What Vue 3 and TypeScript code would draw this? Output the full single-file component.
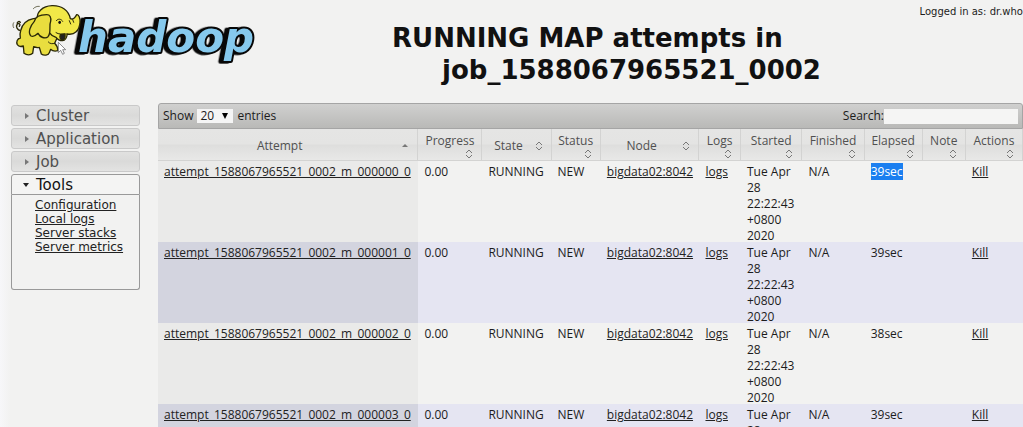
<script setup lang="ts">
interface Column { label: string; key: string; width: string; sorted?: boolean; inline?: boolean }
interface Attempt { id: string; elapsed: string; selected?: boolean }

const columns: Column[] = [
  { label: 'Attempt', key: 'attempt', width: '30.1%', sorted: true, inline: true },
  { label: 'Progress', key: 'progress', width: '7.4%' },
  { label: 'State', key: 'state', width: '8%', inline: true },
  { label: 'Status', key: 'status', width: '5.7%' },
  { label: 'Node', key: 'node', width: '11.4%', inline: true },
  { label: 'Logs', key: 'logs', width: '4.8%' },
  { label: 'Started', key: 'started', width: '7.1%' },
  { label: 'Finished', key: 'finished', width: '7.2%' },
  { label: 'Elapsed', key: 'elapsed', width: '6.7%' },
  { label: 'Note', key: 'note', width: '5%' },
  { label: 'Actions', key: 'actions', width: '6.6%' },
]
const attempts: Attempt[] = [
  { id: 'attempt_1588067965521_0002_m_000000_0', elapsed: '39sec', selected: true },
  { id: 'attempt_1588067965521_0002_m_000001_0', elapsed: '39sec' },
  { id: 'attempt_1588067965521_0002_m_000002_0', elapsed: '38sec' },
  { id: 'attempt_1588067965521_0002_m_000003_0', elapsed: '39sec' },
]
const started = ['Tue Apr', '28', '22:22:43', '+0800', '2020']
const sections = ['Cluster', 'Application', 'Job']
const tools = ['Configuration', 'Local logs', 'Server stacks', 'Server metrics']
</script>

<template>
  <div class="page">
    <header class="top">
      <svg class="logo" viewBox="0 0 810 225" role="img" aria-label="hadoop">
        <text x="234" y="157" class="wordmark">hadoop</text>
        <g stroke="#2a2808" stroke-width="4" stroke-linejoin="round" stroke-linecap="round">
          <path d="M62 92C52 90 46 80 52 72C57 68 63 74 58 79M52 72C50 66 57 62 61 67" fill="none" />
          <path d="M100 56C80 60 66 74 62 92C59 100 60 108 61 114C52 116 48 126 52 134C56 140 64 140 70 138L72 160C80 166 92 166 98 160L101 140C108 143 114 143 118 142L124 162C132 168 146 166 148 158L152 148C158 154 166 154 174 152C174 144 170 136 164 130L174 108L200 98L150 50Z" fill="#e9de3f" />
          <path d="M112 60C108 36 128 18 156 17C186 16 206 32 211 56C219 60 226 52 230 44C236 42 241 54 240 68C238 92 224 106 202 102C200 114 196 122 188 122C178 122 172 118 168 112C160 110 152 104 148 98" fill="#f1e848" />
          <path d="M140 44C122 44 106 50 103 64C92 76 82 98 93 108C101 112 108 106 114 100C120 112 136 118 144 110C155 98 146 78 152 64C154 52 150 44 140 44Z" fill="#e9dd3e" />
          <path d="M181 104C178 112 182 118 187 121C195 119 197 108 194 102Z" fill="#222" />
          <path d="M168 98C176 104 188 102 200 102M208 62L212 72M218 59L221 67M169 62C174 55 184 56 188 64M145 126C150 132 157 132 164 130" fill="none" stroke-width="3" />
          <ellipse cx="179" cy="67" rx="4" ry="5" fill="#111" stroke="none" />
          <path d="M100 26C104 21 112 18 118 19M41 68C38 72 38 78 41 83" fill="none" stroke-width="2" />
        </g>
        <path d="M175 127V158L182 151L188 163L193 160L188 149H197Z" fill="#fff" stroke="#555" stroke-width="2" />
      </svg>
      <h1><span>RUNNING MAP attempts in</span><span class="job">job_1588067965521_0002</span></h1>
      <p class="user">Logged in as: dr.who</p>
    </header>
    <div class="body">
      <nav class="side">
        <button v-for="name in sections" :key="name" type="button" class="section">
          <svg viewBox="0 0 6 8"><path d="M1 1L5 4L1 7Z" /></svg>{{ name }}
        </button>
        <button type="button" class="section open" aria-expanded="true">
          <svg viewBox="0 0 8 6"><path d="M1 1H7L4 5Z" /></svg>Tools
        </button>
        <ul class="links">
          <li v-for="name in tools" :key="name"><a href="#">{{ name }}</a></li>
        </ul>
      </nav>
      <main class="content">
        <div class="toolbar">
          <label class="length">Show
            <span class="pick"><select><option>20</option></select><svg viewBox="0 0 8 6"><path d="M1 0H7L4 6Z" /></svg></span>
            entries</label>
          <label class="search">Search:<input type="text"></label>
        </div>
        <table>
          <colgroup><col v-for="c in columns" :key="c.key" :style="{ width: c.width }"></colgroup>
          <thead>
            <tr>
              <th v-for="c in columns" :key="c.key" scope="col">
                <div class="head" :class="{ inline: c.inline }">
                  <span>{{ c.label }}</span>
                  <svg v-if="c.sorted" class="sort" viewBox="0 0 8 10"><path d="M1 6L4 3L7 6Z" fill="#777" /></svg>
                  <svg v-else class="sort" viewBox="0 0 8 10"><path d="M1 4L4 1L7 4M1 6L4 9L7 6" fill="none" stroke="#777" /></svg>
                </div>
              </th>
            </tr>
          </thead>
          <tbody>
            <tr v-for="a in attempts" :key="a.id">
              <td class="id"><a href="#">{{ a.id }}</a></td>
              <td>0.00</td>
              <td>RUNNING</td>
              <td>NEW</td>
              <td><a href="#">bigdata02:8042</a></td>
              <td><a href="#">logs</a></td>
              <td><div class="date"><div v-for="s in started" :key="s">{{ s }}</div></div></td>
              <td>N/A</td>
              <td><span :class="{ selected: a.selected }">{{ a.elapsed }}</span></td>
              <td></td>
              <td><a href="#">Kill</a></td>
            </tr>
          </tbody>
        </table>
      </main>
    </div>
  </div>
</template>

<style>
html, body { background: #f2f2f1; }
body { margin: 0; overflow: hidden; }
</style>

<style scoped>
.page { height: 100vh; overflow: hidden; box-sizing: border-box; color: #1c1c1c; background: linear-gradient(90deg, #f7f7f9 0, #f2f2f1 10px); font-family: "DejaVu Sans", sans-serif; }
.top { display: grid; grid-template-columns: 270px 1fr 173px; height: 103px; }
.logo { width: 270px; height: 75px; }
.wordmark { font: italic bold 126px "DejaVu Sans", sans-serif; stroke-linejoin: round; paint-order: stroke; fill: #86c9ed; stroke: #080808; stroke-width: 12px; filter: drop-shadow(-10px 2px 0 #080808); }
h1 { margin: 22px 0 0 122px; font-size: 26px; line-height: 32px; white-space: nowrap; color: #111; }
h1 span { display: block; }
h1 .job { margin-left: 50px; }
.user { margin: 5px 0 0; font-size: 10px; line-height: 14px; text-align: right; white-space: nowrap; }
.body { display: flex; align-items: flex-start; gap: 18px; padding-left: 11px; }
.side { flex: 0 0 129px; padding-top: 2px; }
.section { display: flex; align-items: center; gap: 6px; box-sizing: border-box; width: 100%; height: 21px; margin: 0 0 2px; padding: 0 0 0 12px; border: 1px solid #c9c9c9; border-radius: 3px; background: linear-gradient(#e1e1e0, #dadad9 50%, #e3e3e2); color: #505050; font: 15px "DejaVu Sans", sans-serif; }
.section svg { width: 6px; height: 8px; fill: #777; }
.section.open { margin: 0; border-color: #999; border-radius: 3px 3px 0 0; background: #f4f4f3; color: #111; padding-left: 10px; }
.section.open svg { width: 8px; height: 6px; fill: #222; }
.links { box-sizing: border-box; min-height: 95px; margin: 0; padding: 3px 0 0 23px; border: 1px solid #999; border-top: 0; border-radius: 0 0 3px 3px; list-style: none; font-size: 12px; line-height: 14px; white-space: nowrap; }
a { color: #222; text-decoration: underline; }
.content { flex: 1; min-width: 0; font: 12px/16px "Open Sans", sans-serif; }
.toolbar { display: flex; justify-content: space-between; align-items: center; box-sizing: border-box; height: 26px; padding: 0 4px; border: 1px solid #a5a5a5; border-radius: 3px 3px 0 0; background: linear-gradient(#d0d0cf, #b9b9b7); }
.length, .search { display: flex; align-items: center; gap: 4px; }
.search { gap: 0; }
.pick { display: flex; align-items: center; width: 36px; height: 14px; background: #f5f5f5; }
.pick svg { width: 8px; height: 6px; margin-left: -12px; pointer-events: none; }
select { appearance: none; width: 36px; padding: 0 0 0 3px; border: 0; background: transparent; color: #1c1c1c; font: 12px/14px "Open Sans", sans-serif; }
input { box-sizing: border-box; width: 134px; height: 15px; padding: 0 2px; border: 0; background: #f5f5f4; font: inherit; }
table { width: 100%; table-layout: fixed; border-collapse: separate; border-spacing: 0; }
th { height: 32px; padding: 0; box-sizing: border-box; border-right: 1px solid #d3d3d2; border-bottom: 1px solid #d3d3d2; background: linear-gradient(#e5e5e4 0, #e4e4e3 48%, #dededd 52%, #e8e8e7); color: #505050; font-weight: normal; }
.head { display: flex; flex-direction: column; align-items: center; padding-top: 2px; line-height: 16px; }
.head .sort { align-self: flex-end; margin-right: 8px; }
.head.inline { flex-direction: row; }
.head.inline span { flex: 1; text-align: center; }
.head.inline .sort { align-self: center; }
.sort { width: 8px; height: 10px; }
td { height: 81px; box-sizing: border-box; padding: 3px 0 0 6px; vertical-align: top; white-space: nowrap; }
.date { margin-bottom: -2px; }
tbody tr:nth-child(even) td { background: #e5e5f2; }
tbody tr td.id { background: #eaeae9; }
tbody tr:nth-child(even) td.id { background: #d3d4df; }
.selected { background: #1b7ff0; color: #fff; }
</style>
